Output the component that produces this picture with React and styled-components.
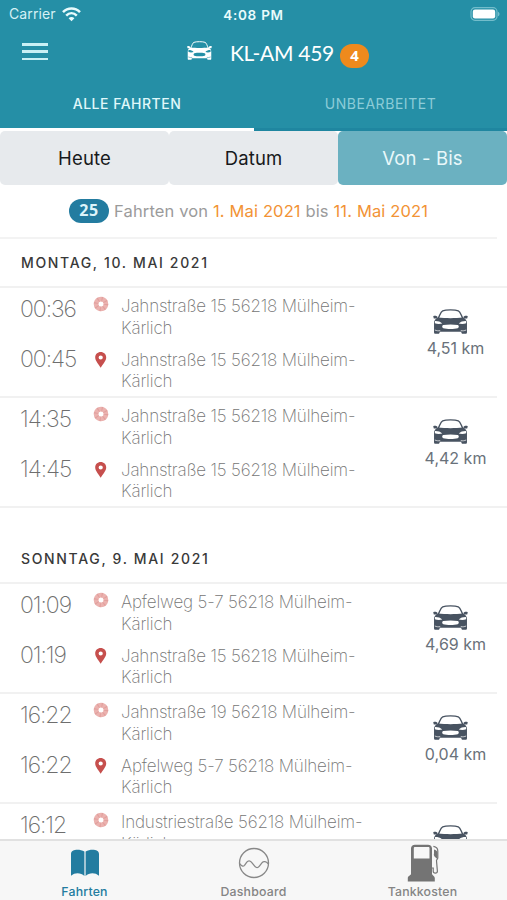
import React from "react";
import styled, { createGlobalStyle } from "styled-components";

const GlobalStyle = createGlobalStyle`
  * { box-sizing: border-box; }
  html, body { margin: 0; padding: 0; overflow: hidden; }
  body { font-family: Inter, "Liberation Sans", sans-serif; background: #fff; }
`;

const Screen = styled.div`
  width: 507px;
  height: 900px;
  display: flex;
  flex-direction: column;
  overflow: hidden;
  background: #fff;
`;

const Header = styled.header`
  flex: none;
  height: 131px;
  background: #258fa6;
  color: #fff;
  display: flex;
  flex-direction: column;
`;

const StatusBar = styled.div`
  height: 27px;
  display: grid;
  grid-template-columns: 1fr auto 1fr;
  align-items: center;
  padding: 0 7px 1px 9px;
  font-size: 14px;
  line-height: 26px;
`;

const Carrier = styled.div`
  display: flex;
  align-items: center;
  gap: 6px;
  color: #d5f1f5;
  letter-spacing: 0.12px;
`;

const Clock = styled.div`
  font-weight: 600;
  font-size: 13.5px;
  letter-spacing: 0.75px;
  color: #e9fbfc;
  padding-right: 2px;
  margin-top: 2px;
`;

const Battery = styled.div`
  display: flex;
  justify-content: flex-end;
`;

const TitleBar = styled.div`
  height: 51px;
  display: flex;
  align-items: center;
  padding: 1px 22px 0;
`;

const Menu = styled.button`
  width: 26px;
  height: 17px;
  padding: 0;
  border: 0;
  background: none;
  display: flex;
  flex-direction: column;
  justify-content: space-between;
  margin-bottom: 3px;
`;

const MenuLine = styled.span`
  height: 2.5px;
  background: #c9f0f5;
`;

const Vehicle = styled.div`
  display: flex;
  align-items: center;
  margin-left: 139px;
  > svg { margin-bottom: 5px; }
`;

const Plate = styled.h1`
  margin: 0 6px 0 18px;
  font: 400 21px/28px Lato, sans-serif;
  letter-spacing: -0.3px;
  white-space: nowrap;
`;

const AlertBadge = styled.span`
  width: 29px;
  height: 24px;
  margin-top: 6px;
  border-radius: 12px;
  background: #ee8a1d;
  font: 700 15px/22px "Open Sans", sans-serif;
  text-align: center;
`;

const Tabs = styled.div`
  flex: 1;
  display: grid;
  grid-template-columns: 254px 253px;
`;

const Tab = styled.div`
  display: flex;
  align-items: center;
  justify-content: center;
  border-bottom: 3px solid ${(p) => (p.$active ? "#fff" : "#1f86a0")};
  color: ${(p) => (p.$active ? "#e0f8fa" : "#8cccd8")};
  font-size: 14px;
  font-weight: ${(p) => (p.$active ? 500 : 400)};
  letter-spacing: ${(p) => (p.$active ? "0.5px" : "0.55px")};
  padding-top: 1px;
`;

const Segments = styled.div`
  flex: none;
  height: 54px;
  display: grid;
  grid-template-columns: 169px 169px 169px;
`;

const Segment = styled.button`
  border: 0;
  padding: 0 0 1px;
  border-radius: 5px;
  background: ${(p) => (p.$active ? "#6bb1c1" : "#e7eaed")};
  color: ${(p) => (p.$active ? "#e9f8fa" : "#17191b")};
  font: 400 18.5px/24px Inter, sans-serif;
  letter-spacing: 0.15px;
`;

const Summary = styled.div`
  flex: none;
  height: 54px;
  display: flex;
  align-items: center;
  padding-left: 69px;
  width: 497px;
  border-bottom: 2px solid #f3f3f3;
  font-size: 16.5px;
  letter-spacing: 0.14px;
  color: #9b9b9b;
  white-space: pre;
`;

const Count = styled.span`
  width: 40px;
  height: 24px;
  margin-right: 5px;
  border-radius: 12px;
  background: #237ca0;
  color: #ddf4fa;
  font: 700 16px/23px "Open Sans", sans-serif;
  text-align: center;
  letter-spacing: 0.7px;
`;

const DateText = styled.span`
  color: #f29335;
`;

const TripList = styled.main`
  flex: 1;
  min-height: 0;
  overflow: hidden;
`;

const Day = styled.section`
  margin-bottom: 27px;
`;

const DayTitle = styled.h2`
  margin: 0;
  height: 49px;
  padding-left: 21px;
  border-bottom: 2px solid #f1f1f1;
  font-size: 14px;
  line-height: 47px;
  font-weight: 500;
  letter-spacing: 1.66px;
  color: #393939;
`;

const Trip = styled.article`
  height: 110px;
  width: ${(p) => (p.$last ? "507px" : "497px")};
  border-bottom: 2px solid #f1f1f1;
  display: grid;
  grid-template-columns: 409px 93px;
`;

const Stops = styled.div`
  padding: 7px 0 0 21px;
`;

const Stop = styled.div`
  height: ${(p) => (p.$start ? "55px" : "48px")};
  display: grid;
  grid-template-columns: 72px 28px 1fr;
`;

const Time = styled.time`
  font-size: 23px;
  line-height: 28px;
  font-weight: 200;
  color: #6e6e6e;
  letter-spacing: -1.05px;
  margin-left: -1px;
  margin-top: ${(p) => (p.$start ? "0" : "-5px")};
`;

const Marker = styled.span`
  padding-top: ${(p) => (p.$start ? "1px" : "2px")};
  svg { display: block; }
`;

const Address = styled.div`
  font-size: 17px;
  line-height: ${(p) => (p.$start ? "22px" : "21px")};
  font-weight: 200;
  color: #747474;
  letter-spacing: -0.17px;
  white-space: nowrap;
`;

const Distance = styled.div`
  display: flex;
  flex-direction: column;
  align-items: center;
  padding-top: 21px;
  font-size: 16px;
  line-height: 22px;
  color: #69717a;
  white-space: nowrap;
  svg { margin: 0 10px 3px 0; }
`;

const BottomBar = styled.nav`
  flex: none;
  height: 61px;
  border-top: 2px solid #e1e1e1;
  background: #f7f7f7;
  display: grid;
  grid-template-columns: repeat(3, 1fr);
`;

const NavItem = styled.div`
  display: flex;
  flex-direction: column;
  align-items: center;
  color: ${(p) => (p.$active ? "#237ca0" : "#858585")};
  font-size: 12.3px;
  line-height: 18px;
  font-weight: 500;
  letter-spacing: 0.2px;
`;

const NavIcon = styled.span`
  height: 42px;
  display: flex;
  align-items: center;
  padding-top: 1px;
`;

function CarIcon({ width, height, color, inner }) {
  return (
    <svg width={width} height={height} viewBox="0 0 34 25" preserveAspectRatio="none" fill="none">
      <path d="M5 9.5C6.8 6 7.4 2.6 9.4 1.8c3-1.2 12.2-1.2 15.2 0 2 .8 2.6 4.2 4.4 7.7" stroke={color} strokeWidth="1.3" />
      <path d="M.2 7.2c1.5-.9 3.4-.4 4.3.8L4 9.4H.8zM33.8 7.2c-1.5-.9-3.4-.4-4.3.8l.5 1.4h3.2z" fill={color} />
      <path d="M5 8.6c7 .8 17 .8 24 0 2.6.9 4 2.9 4 5.6v9c0 1-.5 1.6-1.5 1.6h-2.6c-.9 0-1.4-.6-1.4-1.5v-.6h-21v.6c0 .9-.5 1.5-1.4 1.5H2.5c-1 0-1.5-.6-1.5-1.6v-9c0-2.7 1.4-4.7 4-5.6z" fill={color} />
      <path d="M2 12c2.6-.1 5.4.7 7 2.5-2.4.7-5.2.6-7.2-.2zM32 12c-2.6-.1-5.4.7-7 2.5 2.4.7 5.2.6 7.2-.2zM10 16c4.6-.7 9.4-.7 14 0 1.4.2 1.5 2.7 0 3.3-3.4.9-10.6.9-14 0-1.5-.6-1.4-3.1 0-3.3z" fill={inner} />
      <path d="M1.8 21c1.7.8 3.4 1 5.2.6M32.2 21c-1.7.8-3.4 1-5.2.6" stroke={inner} strokeWidth=".7" />
    </svg>
  );
}

function WifiIcon() {
  return (
    <svg width="19" height="15" viewBox="0 0 19 15" fill="none" stroke="#e9fbfc" strokeWidth="2.5">
      <path d="M1 5.2c4.8-4.9 12.2-4.9 17 0M4.2 8.6c3.1-3.1 7.5-3.1 10.6 0" />
      <path d="M6.6 11.2c1.8-1.6 4-1.6 5.8 0l-2.9 3z" fill="#e9fbfc" stroke="none" />
    </svg>
  );
}

function BatteryIcon() {
  return (
    <svg width="30" height="14" viewBox="0 0 30 14">
      <rect x="1" y=".7" width="26" height="12.6" rx="4" fill="none" stroke="#73bdcb" strokeWidth="1.2" />
      <rect x="2.8" y="2.5" width="22.4" height="9" rx="2.2" fill="#fff" />
      <path d="M28 4.7c2 .8 2 3.8 0 4.6z" fill="#73bdcb" />
    </svg>
  );
}

function StartIcon() {
  return (
    <svg width="16" height="16" viewBox="0 0 16 16" fill="none">
      <circle cx="8" cy="8" r="4.9" stroke="#ebb2af" strokeWidth="4.8" />
      <circle cx="8" cy="8" r="4.9" stroke="#d98e8b" strokeWidth="4.8" strokeDasharray="1 2.85" opacity=".5" />
    </svg>
  );
}

function PinIcon() {
  return (
    <svg width="16" height="16" viewBox="0 0 16 16">
      <path fillRule="evenodd" d="M7.7 0C4.5 0 2.2 2.3 2.2 5.4c0 3.7 4.1 7.3 5.5 10.4 1.4-3.1 5.5-6.7 5.5-10.4C13.2 2.3 10.9 0 7.7 0zm0 3.4a2.1 2.1 0 1 1 0 4.2 2.1 2.1 0 0 1 0-4.2z" fill="#c64f4d" />
    </svg>
  );
}

function BookIcon() {
  return (
    <svg width="30" height="28" viewBox="0 0 30 28" fill="#237ca0">
      <path d="M1 5C1 .3 9-.2 14.4 2.4V27C11 23.7 5 23.2 1 26.8zM15.6 2.4C21-.2 29 .3 29 5v21.8c-4-3.6-10-3.1-13.4.2z" />
    </svg>
  );
}

function DashboardIcon() {
  return (
    <svg width="32" height="32" viewBox="0 0 32 32" fill="none" stroke="#888" strokeWidth="1.3">
      <circle cx="16" cy="16" r="14.5" />
      <path d="M1.7 16.7c1.4 2.2 3.4 3.3 4.8 1.6l2.3-3.1c1.4-1.8 3.1-1.8 4.6 0l3.3 3.9c1.7 2 3.1 2 4.7 0l2.5-3.2c1.7-2 4.3-1.4 6.3.8" />
    </svg>
  );
}

function FuelIcon() {
  return (
    <svg width="34" height="38" viewBox="0 0 34 38">
      <path fillRule="evenodd" d="M5 4.5C5 2.2 6.7.8 9 .8h13c2.3 0 4 1.4 4 3.7V30c0 1 2.8 2 2.8 4v3.5H1.8V34C1.8 32 5 31 5 30zM7.8 4v10.5h15.7V4c0-.5-.4-.9-.9-.9H8.7c-.5 0-.9.4-.9.9z" fill="#747474" />
      <path d="M26 24h1.2v3.2c0 2.5 4.2 2.5 4.2 0l-.9-10.5c-.1-1.2 1.3-1.5 1.3-3V7c0-2.5-2-4.3-4.4-4.7" fill="none" stroke="#747474" strokeWidth="1.2" />
      <path d="M28 5.5c2 .4 3.5 1.5 3.5 3.5v5.8c-1.8-1-4.4-2.8-3.5-5.3z" fill="#747474" />
    </svg>
  );
}

const JAHN15 = "Jahnstraße 15 56218 Mülheim-";
const APFEL = "Apfelweg 5-7 56218 Mülheim-";

const DAYS = [
  {
    title: "MONTAG, 10. MAI 2021",
    trips: [
      { km: "4,51 km", stops: [["00:36", JAHN15], ["00:45", JAHN15]] },
      { km: "4,42 km", stops: [["14:35", JAHN15], ["14:45", JAHN15]] },
    ],
  },
  {
    title: "SONNTAG, 9. MAI 2021",
    trips: [
      { km: "4,69 km", stops: [["01:09", APFEL], ["01:19", JAHN15]] },
      { km: "0,04 km", stops: [["16:22", "Jahnstraße 19 56218 Mülheim-"], ["16:22", APFEL]] },
      { km: "", stops: [["16:12", "Industriestraße 56218 Mülheim-"]] },
    ],
  },
];

function TripRow({ trip, last }) {
  return (
    <Trip $last={last}>
      <Stops>
        {trip.stops.map(([time, address], i) => (
          <Stop key={i} $start={i === 0}>
            <Time $start={i === 0}>{time}</Time>
            <Marker $start={i === 0}>{i === 0 ? <StartIcon /> : <PinIcon />}</Marker>
            <Address $start={i === 0}>
              {address}
              <br />
              Kärlich
            </Address>
          </Stop>
        ))}
      </Stops>
      <Distance>
        <CarIcon width={35} height={25} color="#485361" inner="#fff" />
        {trip.km}
      </Distance>
    </Trip>
  );
}

export default function App() {
  return (
    <>
      <GlobalStyle />
      <Screen>
        <Header>
          <StatusBar>
            <Carrier>Carrier <WifiIcon /></Carrier>
            <Clock>4:08 PM</Clock>
            <Battery><BatteryIcon /></Battery>
          </StatusBar>
          <TitleBar>
            <Menu aria-label="Menü"><MenuLine /><MenuLine /><MenuLine /></Menu>
            <Vehicle>
              <CarIcon width={25} height={19} color="#fff" inner="#258fa6" />
              <Plate>KL-AM 459</Plate>
              <AlertBadge>4</AlertBadge>
            </Vehicle>
          </TitleBar>
          <Tabs>
            <Tab $active>ALLE FAHRTEN</Tab>
            <Tab>UNBEARBEITET</Tab>
          </Tabs>
        </Header>
        <Segments>
          <Segment>Heute</Segment>
          <Segment>Datum</Segment>
          <Segment $active>Von - Bis</Segment>
        </Segments>
        <Summary>
          <Count>25</Count>
          Fahrten von <DateText>1. Mai 2021</DateText> bis <DateText>11. Mai 2021</DateText>
        </Summary>
        <TripList>
          {DAYS.map((day) => (
            <Day key={day.title}>
              <DayTitle>{day.title}</DayTitle>
              {day.trips.map((trip, i) => (
                <TripRow key={i} trip={trip} last={i === day.trips.length - 1} />
              ))}
            </Day>
          ))}
        </TripList>
        <BottomBar>
          <NavItem $active><NavIcon><BookIcon /></NavIcon>Fahrten</NavItem>
          <NavItem><NavIcon><DashboardIcon /></NavIcon>Dashboard</NavItem>
          <NavItem><NavIcon><FuelIcon /></NavIcon>Tankkosten</NavItem>
        </BottomBar>
      </Screen>
    </>
  );
}
